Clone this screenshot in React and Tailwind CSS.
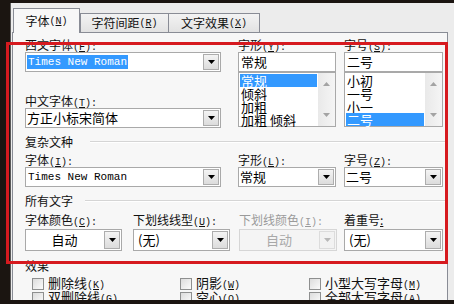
import React from "react";

const Hk = ({ k, colon = true }) => (
  <span className="font-['Liberation_Mono',monospace] text-[10px]">
    (<span className="underline">{k}</span>){colon ? ":" : ""}
  </span>
);

const Label = ({ children, disabled }) => (
  <div
    className={`h-[14px] leading-[14px] text-[12px] whitespace-nowrap ${
      disabled ? "text-[#9a9a9a]" : "text-[#111]"
    }`}
  >
    {children}
  </div>
);

const Arrow = ({ color = "#000" }) => (
  <svg width="7" height="4" viewBox="0 0 7 4">
    <path d="M0 0 H7 L3.5 4 Z" fill={color} />
  </svg>
);

const DropBtn = ({ disabled }) => (
  <div
    className={`w-[16px] self-stretch m-[1px] flex items-center justify-center border ${
      disabled
        ? "border-[#dcdcdc] bg-[#f2f2f2]"
        : "border-[#adadad] bg-gradient-to-b from-[#f4f4f4] to-[#dcdcdc]"
    }`}
  >
    <Arrow color={disabled ? "#b8b8b8" : "#000"} />
  </div>
);

const Combo = ({ className, children, disabled, center }) => (
  <div
    className={`flex border ${
      disabled ? "border-[#d6d6d6] bg-[#f4f4f4] text-[#a8a8a8]" : "border-[#a9a9a9] bg-white text-black"
    } ${className}`}
  >
    <div
      className={`flex-1 min-w-0 flex items-center px-[1px] text-[13px] whitespace-nowrap ${
        center ? "justify-center" : ""
      }`}
    >
      {children}
    </div>
    <DropBtn disabled={disabled} />
  </div>
);

const Mono = ({ children, selected }) => (
  <span
    className={`font-['Liberation_Mono',monospace] text-[11px] leading-[14px] px-[1px] ${
      selected ? "bg-[#3399ff] text-white" : ""
    }`}
  >
    {children}
  </span>
);

const ListBox = ({ items, selected }) => (
  <div className="h-[55px] flex border border-[#a9a9a9] bg-white">
    <div className="flex-1 p-[1px] flex flex-col">
      {items.map((it) => (
        <div
          key={it}
          className={`h-[13px] leading-[13px] text-[13px] px-[1px] whitespace-pre ${
            it === selected ? "bg-[#3399ff] text-white" : "text-black"
          }`}
        >
          {it}
        </div>
      ))}
    </div>
    <div className="w-[17px] bg-gradient-to-r from-[#e9e9e9] to-[#f5f5f5] flex flex-col items-center justify-between py-[9px]">
      <svg width="7" height="4" viewBox="0 0 7 4">
        <path d="M0 4 H7 L3.5 0 Z" fill="#a3a3a3" />
      </svg>
      <Arrow color="#a3a3a3" />
    </div>
  </div>
);

const Group = ({ title, lineGap }) => (
  <div className="h-[13px] flex items-center pr-0">
    <span className="text-[12px] leading-[13px] text-[#111] whitespace-nowrap">{title}</span>
    <div className={`flex-1 flex flex-col ${lineGap}`}>
      <div className="h-px bg-[#d5d5d5]" />
      <div className="h-px bg-white" />
    </div>
  </div>
);

const Check = ({ children }) => (
  <div className="flex items-center h-[14px] whitespace-nowrap">
    <div className="w-[12px] h-[12px] border border-[#8e8f8f] bg-gradient-to-br from-[#dcdcdc] to-[#fbfbfb]" />
    <span className="ml-[4px] text-[13px] leading-[14px] text-[#111]">{children}</span>
  </div>
);

const Tab = ({ children, active, className }) => (
  <div
    className={`flex items-center justify-center text-[12px] text-[#111] border border-[#898c95] ${
      active
        ? "relative z-10 h-[25px] -mb-px border-b-0 bg-[#f7f7f7]"
        : "h-[19px] border-b-0 bg-gradient-to-b from-[#f3f3f3] to-[#e2e2e2]"
    } ${className}`}
  >
    {children}
  </div>
);

export default function App() {
  return (
    <div className="relative w-[454px] h-[304px] overflow-hidden bg-[#1b1511] font-['Noto_Sans_CJK_SC','Noto_Sans',sans-serif]">
      <div className="ml-[10px] mt-[3px] h-[297px] overflow-hidden bg-[#ececec] border-l border-[#5a5a5a] flex flex-col pt-[5px]">
        <div className="flex items-end h-[24px] pl-[2px]">
          <Tab active className="w-[67px]">
            字体<Hk k="N" colon={false} />
          </Tab>
          <Tab className="w-[89px]">
            字符间距<Hk k="R" colon={false} />
          </Tab>
          <Tab className="w-[92px] -ml-px">
            文字效果<Hk k="X" colon={false} />
          </Tab>
        </div>

        <div className="flex-1 ml-[1px] mr-[6px] border border-[#898c95] bg-[#f7f7f7] pl-[12px] pt-[5px]">
          <div className="flex">
            <div className="w-[196px] flex flex-col">
              <Label>
                西文字体<Hk k="F" />
              </Label>
              <Combo className="h-[20px]">
                <Mono selected>Times New Roman</Mono>
              </Combo>
              <div className="mt-[22px]">
                <Label>
                  中文字体<Hk k="T" />
                </Label>
              </div>
              <Combo className="h-[20px]">方正小标宋简体</Combo>
            </div>

            <div className="w-[98px] ml-[17px] flex flex-col">
              <Label>
                字形<Hk k="Y" />
              </Label>
              <div className="h-[20px] border border-[#a9a9a9] bg-white text-[13px] leading-[18px] px-[2px]">常规</div>
              <ListBox items={["常规", "倾斜", "加粗", "加粗 倾斜"]} selected="常规" />
            </div>

            <div className="w-[99px] ml-[8px] flex flex-col">
              <Label>
                字号<Hk k="S" />
              </Label>
              <div className="h-[20px] border border-[#a9a9a9] bg-white text-[13px] leading-[18px] px-[2px]">二号</div>
              <ListBox items={["小初", "一号", "小一", "二号"]} selected="二号" />
            </div>
          </div>

          <div className="mt-[7px]">
            <Group title="复杂文种" lineGap="ml-[17px]" />
          </div>

          <div className="flex mt-[5px]">
            <div className="w-[196px] flex flex-col">
              <Label>
                字体<Hk k="I" />
              </Label>
              <Combo className="h-[20px]">
                <Mono>Times New Roman</Mono>
              </Combo>
            </div>
            <div className="w-[98px] ml-[17px] flex flex-col">
              <Label>
                字形<Hk k="L" />
              </Label>
              <Combo className="h-[20px]">常规</Combo>
            </div>
            <div className="w-[99px] ml-[8px] flex flex-col">
              <Label>
                字号<Hk k="Z" />
              </Label>
              <Combo className="h-[20px]">二号</Combo>
            </div>
          </div>

          <div className="mt-[7px]">
            <Group title="所有文字" lineGap="ml-[12px]" />
          </div>

          <div className="flex mt-[6px]">
            <div className="w-[97px] flex flex-col">
              <Label>
                字体颜色<Hk k="C" />
              </Label>
              <Combo className="h-[22px] mt-[2px]" center>
                自动
              </Combo>
            </div>
            <div className="w-[97px] ml-[11px] flex flex-col">
              <Label>
                下划线线型<Hk k="U" />
              </Label>
              <Combo className="h-[22px] mt-[2px]">
                <span className="pl-[3px]">(无)</span>
              </Combo>
            </div>
            <div className="w-[98px] ml-[9px] flex flex-col">
              <Label disabled>
                下划线颜色<Hk k="I" />
              </Label>
              <Combo className="h-[22px] mt-[2px]" center disabled>
                自动
              </Combo>
            </div>
            <div className="w-[99px] ml-[7px] flex flex-col">
              <Label>
                着重号<span className="underline">:</span>
              </Label>
              <Combo className="h-[22px] mt-[2px]">
                <span className="pl-[3px]">(无)</span>
              </Combo>
            </div>
          </div>

          <div className="mt-[8px]">
            <Group title="效果" lineGap="ml-[12px] opacity-0" />
          </div>

          <div className="mt-[5px] pl-[7px] grid grid-cols-[148px_129px_1fr] gap-y-[0px]">
            <Check>
              删除线<Hk k="K" colon={false} />
            </Check>
            <Check>
              阴影<Hk k="W" colon={false} />
            </Check>
            <Check>
              小型大写字母<Hk k="M" colon={false} />
            </Check>
            <Check>
              双删除线<Hk k="G" colon={false} />
            </Check>
            <Check>
              空心<Hk k="O" colon={false} />
            </Check>
            <Check>
              全部大写字母<Hk k="A" colon={false} />
            </Check>
          </div>
        </div>
      </div>

      <div className="absolute left-[6px] top-[42px] w-[442px] h-[222px] border-[3px] border-[#d61a1f] pointer-events-none" />
    </div>
  );
}
